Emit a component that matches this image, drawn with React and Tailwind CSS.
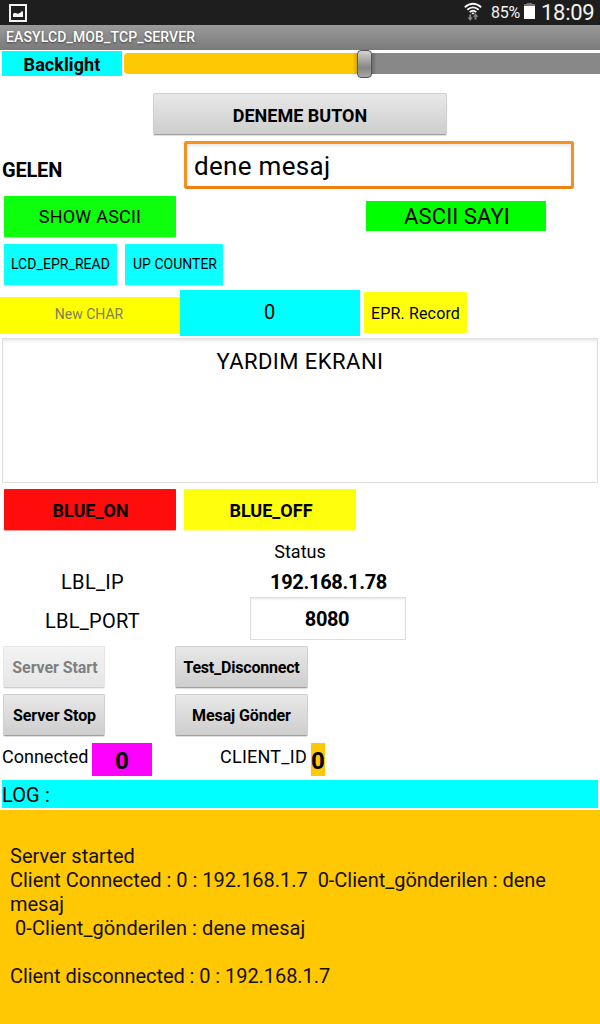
const logLines = [
  { text: "", spacing: "" },
  { text: "Server started", spacing: "" },
  { text: "Client Connected : 0 : 192.168.1.7  0-Client_gönderilen : dene mesaj", spacing: "tracking-[-0.02px]" },
  { text: " 0-Client_gönderilen : dene mesaj", spacing: "tracking-[0.08px]" },
  { text: "", spacing: "" },
  { text: "Client disconnected : 0 : 192.168.1.7", spacing: "tracking-[-0.06px]" },
];

function GrayButton({ className = "", children }) {
  return (
    <button
      className={`flex h-[42px] shrink-0 items-center justify-center whitespace-nowrap rounded-[2px] border border-[#cfcfcf] border-b-[#a0a0a0] bg-linear-to-b from-[#e8e8e8] to-[#cecece] pt-[2px] font-bold text-black shadow-[0_1px_1px_#ddd] ${className}`}
    >
      {children}
    </button>
  );
}

function FlatButton({ className = "", children }) {
  return (
    <button
      className={`flex h-[41px] shrink-0 items-center justify-center whitespace-nowrap rounded-[1px] text-black ${className}`}
    >
      {children}
    </button>
  );
}

function StatusBar() {
  return (
    <header className="flex h-[25px] items-center bg-[#1e1e1e] text-[#f2f2f2]">
      <svg className="ml-[9px] mt-px" width="18" height="18" viewBox="0 0 18 18">
        <rect x="1" y="1" width="16" height="16" fill="#1e1e1e" stroke="#f2f2f2" strokeWidth="2" />
        <path d="M4 13V10L5 9H7L9 10L10 9L11 9L13 7L14 8V13Z" fill="#f2f2f2" />
      </svg>
      <svg className="ml-auto" width="18" height="25" viewBox="0 0 18 25">
        <g fill="none" stroke="#f5f5f5" strokeWidth="1.8">
          <path d="M.8 7.2Q9 .2 17.2 7.2" />
          <path d="M3.3 9.8Q9 5 14.7 9.8" />
          <path d="M5.7 12.2Q9 9.2 12.3 12.2" />
        </g>
        <path d="M7.2 12.9Q9 11.9 10.8 12.9L9 14.5Z" fill="#f5f5f5" />
        <path d="M5.2 14.5H7.2V17.5H8.7L6.2 21L3.5 17.5H5.2Z" fill="#858585" />
        <path d="M10.5 19.5H12.5V16.8H14.3L11.5 13.3L9 16.8H10.5Z" fill="#858585" />
      </svg>
      <span className="ml-[9px] w-[33px] whitespace-nowrap text-[16px] tracking-[-0.3px]">85%</span>
      <svg width="11" height="16" viewBox="0 0 11 16" className="-mt-[3px]">
        <path d="M0 1H3V0H8V1H11V3H0Z" fill="#777" />
        <rect y="3" width="11" height="13" fill="#fff" />
      </svg>
      <span className="ml-[6px] w-[59px] whitespace-nowrap text-[22px] leading-[23px] tracking-[-0.3px]">18:09</span>
    </header>
  );
}

export default function App() {
  return (
    <main className="flex h-[1024px] w-[600px] flex-col overflow-hidden bg-white font-['Roboto',sans-serif] text-black">
      <StatusBar />
      <h1 className="h-[25px] bg-linear-to-b from-[#9a9a9a] to-[#7a7a7a] pl-[6px] text-[14px] font-medium leading-[24px] tracking-[0.13px] text-white [text-shadow:0_1px_2px_#444]">
        EASYLCD_MOB_TCP_SERVER
      </h1>

      <section className="flex h-[43px] items-start pl-[2px]">
        <div className="mt-px h-[25px] w-[120px] bg-[#00ffff] text-center text-[18px] font-bold leading-[27px] tracking-[0.08px]">Backlight</div>
        <div className="ml-[2px] flex h-[28px] flex-1 items-center">
          <div className="-mt-[2px] h-[21px] w-[233px] rounded-l-[4px] bg-linear-to-r from-[#ffc803] from-98% to-[#dba900]" />
          <div className="h-[28px] w-[15px] rounded-[4px] border-[1.5px] border-[#555] bg-linear-to-b from-[#d4d4d4] via-[#858585] via-65% to-[#a8a8a8]" />
          <div className="-mt-[2px] h-[21px] flex-1 bg-linear-to-r from-[#6c6c6c] to-[#888] to-2%" />
        </div>
      </section>

      <section className="flex h-[48px] justify-center">
        <GrayButton className="w-[294px] text-[18px]">DENEME BUTON</GrayButton>
      </section>

      <section className="flex h-[54px] items-start">
        <div className="w-[184px] pl-[2px] pt-[17px] text-[20px] font-bold leading-[24px] tracking-[-0.2px]">GELEN</div>
        <div className="h-[48px] w-[390px] rounded-[3px] border-[3px] border-[#f7901e] border-b-[#ef8010] pl-[7px] text-[26px] leading-[45px] tracking-[0.3px] shadow-[inset_0_2px_3px_#e5e5e5]">
          dene mesaj
        </div>
      </section>

      <section className="flex h-[48px] items-start pl-[4px]">
        <FlatButton className="mt-px w-[172px] bg-[#0dff0d] text-[18px] tracking-[0.2px] shadow-[0_1px_0_#9f9]">SHOW ASCII</FlatButton>
        <div className="ml-[190px] mt-[6px] h-[30px] w-[180px] bg-[#00ff00] pl-[2px] text-center text-[22px] leading-[32px] tracking-[0.1px]">ASCII SAYI</div>
      </section>

      <section className="flex h-[47px] items-start gap-[8px] pl-[4px]">
        <FlatButton className="mt-px w-[113px] bg-[#0dffff] text-[14px] tracking-[0.06px] shadow-[0_1px_0_#9ff]">LCD_EPR_READ</FlatButton>
        <FlatButton className="mt-px w-[98px] bg-[#0dffff] pl-[2px] text-[14px] shadow-[0_1px_0_#9ff]">UP COUNTER</FlatButton>
      </section>

      <section className="flex h-[48px] items-start">
        <div className="mt-[7px] h-[37px] w-[180px] bg-[#ffff00] pr-[2px] text-center text-[14px] leading-[35px] text-[#808055]">New CHAR</div>
        <div className="h-[46px] w-[180px] bg-[#00ffff] pr-px text-center text-[20px] leading-[45px]">0</div>
        <FlatButton className="ml-[4px] mt-[2px] w-[103px] bg-[#ffff0d] pt-[2px] text-[16px] tracking-[0.15px]">EPR. Record</FlatButton>
      </section>

      <section className="mx-[2px] h-[145px] border border-[#dedede] text-center text-[22px] leading-[45px] tracking-[0.45px] shadow-[inset_0_3px_3px_-1px_#e8e8e8]">
        YARDIM EKRANI
      </section>

      <section className="flex h-[57px] items-start gap-[8px] pl-[4px] pt-[6px]">
        <FlatButton className="w-[172px] bg-[#ff0d0d] pl-px pt-[2px] text-[18px] font-bold shadow-[0_1px_0_#f99]">BLUE_ON</FlatButton>
        <FlatButton className="w-[172px] bg-[#ffff0d] pl-[2px] pt-[2px] text-[18px] font-bold shadow-[0_1px_0_#ff9]">BLUE_OFF</FlatButton>
      </section>

      <section className="h-[27px] text-center text-[18px] leading-[23px]">Status</section>

      <section className="flex h-[30px] text-center text-[20px] leading-[30px]">
        <div className="w-[185px] tracking-[0.3px]">LBL_IP</div>
        <div className="ml-[65px] w-[156px] pl-px font-bold tracking-[-0.3px]">192.168.1.78</div>
      </section>

      <section className="flex h-[49px] text-center text-[20px]">
        <div className="w-[185px] leading-[48px] tracking-[0.25px]">LBL_PORT</div>
        <div className="ml-[65px] h-[43px] w-[156px] border border-[#dedede] pr-[2px] font-bold leading-[42px] tracking-[-0.4px] shadow-[inset_0_2px_3px_-1px_#e5e5e5]">8080</div>
      </section>

      <section className="flex h-[48px] gap-[70px] pl-[3px]">
        <GrayButton className="w-[102px] pl-[2px] text-[16px] tracking-[-0.1px] opacity-50">Server Start</GrayButton>
        <GrayButton className="w-[133px] text-[16px] tracking-[-0.2px]">Test_Disconnect</GrayButton>
      </section>
      <section className="flex h-[49px] gap-[70px] pl-[3px]">
        <GrayButton className="w-[102px] pl-px text-[16px] tracking-[-0.1px]">Server Stop</GrayButton>
        <GrayButton className="w-[133px] text-[16px] tracking-[-0.1px]">Mesaj Gönder</GrayButton>
      </section>

      <section className="flex h-[37px] items-start whitespace-nowrap pl-[2px]">
        <div className="w-[90px] text-[18px] leading-[28px]">Connected</div>
        <div className="h-[33px] w-[60px] bg-[#ff00ff] text-center text-[24px] font-bold leading-[36px]">0</div>
        <div className="ml-[68px] w-[91px] text-[18px] leading-[28px] tracking-[0.25px]">CLIENT_ID</div>
        <div className="h-[33px] w-[14px] bg-[#ffc803] text-center text-[24px] font-bold leading-[36px]">0</div>
      </section>

      <div className="mx-[2px] h-[28px] bg-[#00ffff] text-[20px] leading-[30px] tracking-[0.1px]">LOG :</div>
      <div className="mt-[2px] flex-1 bg-[#ffc803] px-[10px] pt-[10px] text-[20px] leading-[24px] text-[#151000]">
        {logLines.map((line, i) => (
          <p key={i} className={`min-h-[24px] whitespace-pre-wrap ${line.spacing}`}>{line.text}</p>
        ))}
      </div>
    </main>
  );
}
